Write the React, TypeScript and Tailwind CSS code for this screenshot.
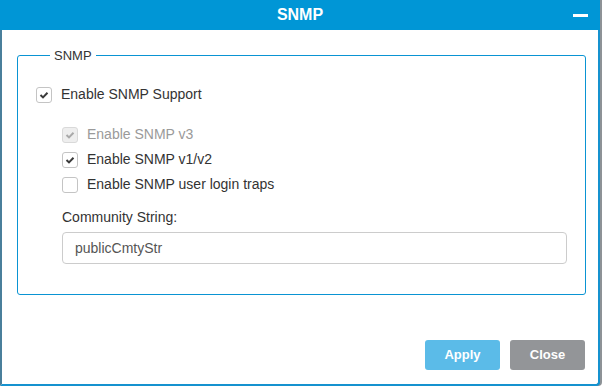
import React, { useState } from "react";

type CheckProps = {
  checked: boolean;
  disabled?: boolean;
  label: string;
  onChange?: () => void;
};

function Check({ checked, disabled, label, onChange }: CheckProps) {
  return (
    <label className="flex h-[25px] items-center cursor-pointer select-none">
      <span
        onClick={disabled ? undefined : onChange}
        className={
          disabled
            ? "flex h-[16px] w-[16px] items-center justify-center rounded-[3px] border border-[#d9d9d9] bg-[#eeeeee]"
            : "flex h-[16px] w-[16px] items-center justify-center rounded-[3px] border border-[#c4c4c4] bg-white"
        }
      >
        {checked && (
          <svg width="14" height="14" viewBox="0 0 14 14">
            <path
              d="M3.5 7 L6 9.4 L10.5 4.8"
              fill="none"
              stroke={disabled ? "#a9a9a9" : "#3a3a3a"}
              strokeWidth="2"
            />
          </svg>
        )}
      </span>
      <span
        className={
          disabled
            ? "ml-[9px] text-[14px] text-[#9a9a9a]"
            : "ml-[9px] text-[14px] text-[#333333]"
        }
      >
        {label}
      </span>
    </label>
  );
}

export default function App() {
  const [enabled, setEnabled] = useState(true);
  const [v12, setV12] = useState(true);
  const [traps, setTraps] = useState(false);
  const [community, setCommunity] = useState("publicCmtyStr");

  return (
    <div
      className="h-[386px] w-[602px] bg-white"
      style={{ fontFamily: '"Liberation Sans", Arial, sans-serif' }}
    >
      <div className="flex h-[386px] w-[600px] flex-col rounded-br-[4px] border-b-2 border-l-2 border-r-2 border-b-[#1592cf] border-l-[#4a7f9b] border-r-[#1592cf] bg-white shadow-[2px_0_0_#8d9296]">
        {/* title bar */}
        <div className="relative -mx-[2px] flex h-[30px] shrink-0 items-center justify-center bg-[#0096d6]">
          <span className="text-[16px] font-bold text-white">SNMP</span>
          <span className="absolute right-[12px] top-[14px] h-[3px] w-[15px] bg-white" />
        </div>

        <fieldset className="ml-[15px] mr-[14px] mt-[17px] rounded-[3px] border border-[#0a94d3] pb-[30px] pl-[18px] pr-[18px]">
          <legend className="ml-[14px] px-[4px] text-[13px] leading-[17px] text-[#333333]">
            SNMP
          </legend>

          <div className="mt-[18px]">
            <Check
              checked={enabled}
              label="Enable SNMP Support"
              onChange={() => setEnabled(!enabled)}
            />
          </div>

          <div className="mt-[15px] pl-[26px]">
            <Check checked={true} disabled label="Enable SNMP v3" />
            <Check checked={v12} label="Enable SNMP v1/v2" onChange={() => setV12(!v12)} />
            <Check
              checked={traps}
              label="Enable SNMP user login traps"
              onChange={() => setTraps(!traps)}
            />

            <div className="mt-[10px] flex h-[20px] items-center text-[14px] text-[#333333]">
              Community String:
            </div>
            <input
              value={community}
              onChange={(e) => setCommunity(e.target.value)}
              className="mt-[5px] h-[32px] w-[505px] rounded-[4px] border border-[#cccccc] px-[12px] text-[14px] text-[#555555] outline-none"
            />
          </div>
        </fieldset>

        <div className="mt-auto mb-[14px] mr-[13px] flex justify-end gap-[10px]">
          <button className="h-[30px] w-[75px] rounded-[3px] bg-[#5bbbe8] text-[13px] font-bold text-white">
            Apply
          </button>
          <button className="h-[30px] w-[75px] rounded-[3px] bg-[#939598] text-[13px] font-bold text-white">
            Close
          </button>
        </div>
      </div>
    </div>
  );
}
